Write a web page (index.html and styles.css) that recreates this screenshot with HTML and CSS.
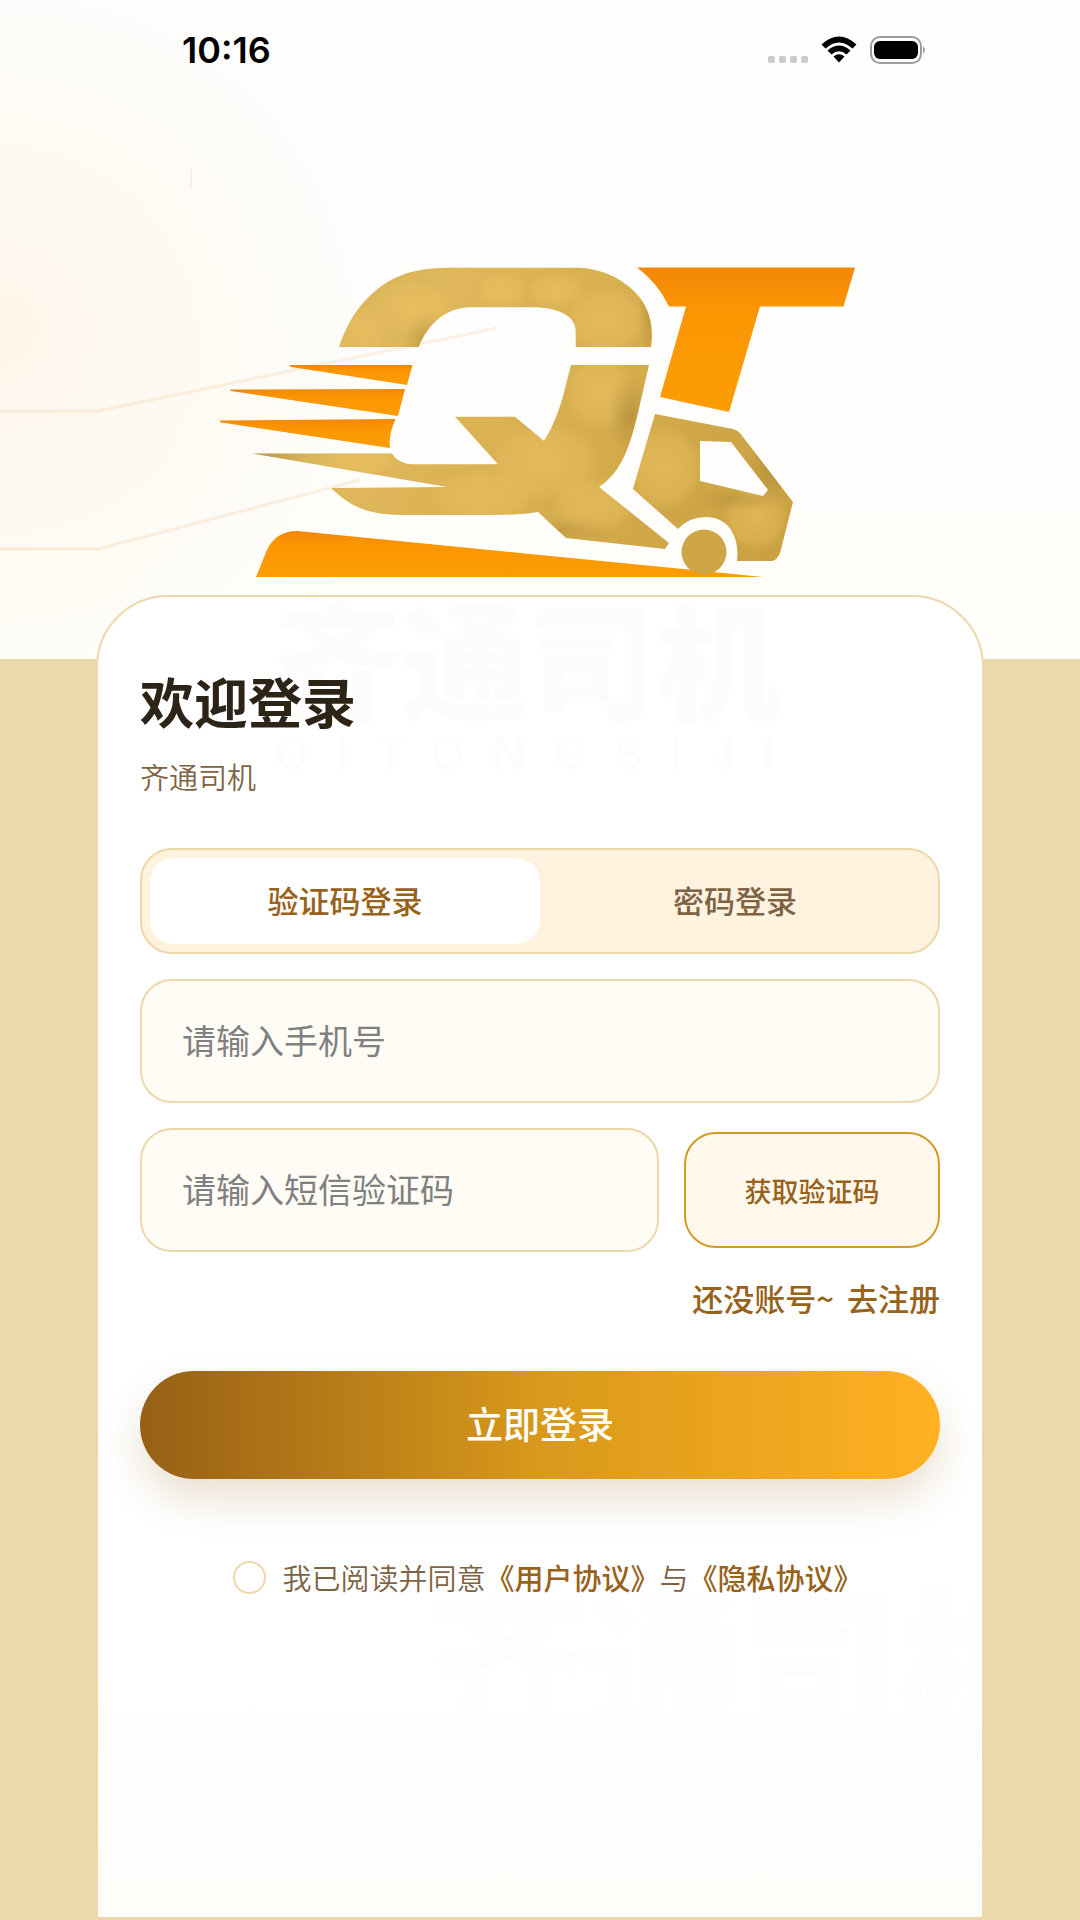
FILE: index.html
```html
<!DOCTYPE html>
<html lang="zh-CN">
<head>
  <meta charset="UTF-8">
  <meta name="viewport" content="width=device-width, initial-scale=1.0">
  <title>齐通司机 - 登录</title>
  <link rel="stylesheet" href="styles.css">
</head>
<body>
  <header class="hero">
    <svg class="hero-lines" viewBox="0 0 1080 660" preserveAspectRatio="xMidYMin slice" aria-hidden="true">
      <defs>
        <linearGradient id="lineFade" gradientUnits="userSpaceOnUse" x1="0" y1="0" x2="500" y2="0">
          <stop offset="0" stop-color="#f9ead5"/>
          <stop offset="1" stop-color="#fcf1e4"/>
        </linearGradient>
      </defs>
      <path d="M0 411H98L497 328M0 549H98L360 480" fill="none" stroke="url(#lineFade)" stroke-width="3"/>
      <path d="M191 168V187" stroke="#f3f1ee" stroke-width="2"/>
    </svg>

    <div class="status-bar">
      <span class="time">10:16</span>
      <div class="status-icons">
        <svg width="40" height="28" viewBox="0 0 40 28" aria-hidden="true">
          <g fill="#cbcbcb">
            <rect x="0" y="20" width="7" height="7" rx="2"/>
            <rect x="11" y="20" width="7" height="7" rx="2"/>
            <rect x="22" y="20" width="7" height="7" rx="2"/>
            <rect x="33" y="20" width="7" height="7" rx="2"/>
          </g>
        </svg>
        <svg width="36" height="28" viewBox="0 0 36 28" aria-hidden="true">
          <path d="M0.500 8.500Q18 -7.500 35.500 8.500L31.500 12.500Q18 0.500 4.500 12.500Z"/>
          <path d="M6.500 14.500Q18 4.500 29.500 14.500L25.500 18.500Q18 12 10.500 18.500Z"/>
          <path d="M12.500 20.500Q18 16 23.500 20.500L18 26.500Z"/>
        </svg>
        <svg width="57" height="28" viewBox="0 0 57 28" aria-hidden="true">
          <rect x="1" y="1" width="50" height="26" rx="9" fill="none" stroke="#9c9c9c" stroke-width="2"/>
          <rect x="4" y="5" width="44" height="18" rx="6"/>
          <path d="M53 10Q57 14 53 18Z" fill="#9c9c9c"/>
        </svg>
      </div>
    </div>

    <svg class="logo" viewBox="220 266 640 312" role="img" aria-label="齐通司机">
      <defs>
        <linearGradient id="gold" gradientUnits="userSpaceOnUse" x1="250" y1="300" x2="790" y2="560">
          <stop offset="0" stop-color="#d5b25d"/>
          <stop offset=".3" stop-color="#dfb75a"/>
          <stop offset=".6" stop-color="#d6ad4e"/>
          <stop offset="1" stop-color="#c9a040"/>
        </linearGradient>
        <linearGradient id="orange" x1="0" y1="0" x2="0" y2="1">
          <stop offset="0" stop-color="#f38608"/>
          <stop offset=".3" stop-color="#fb9603"/>
          <stop offset="1" stop-color="#fc9d04"/>
        </linearGradient>
        <radialGradient id="light">
          <stop offset="0" stop-color="#edc463" stop-opacity=".6"/>
          <stop offset=".7" stop-color="#eac060" stop-opacity=".4"/>
          <stop offset="1" stop-color="#e5bc5c" stop-opacity="0"/>
        </radialGradient>
        <radialGradient id="dark">
          <stop offset="0" stop-color="#a98636" stop-opacity=".6"/>
          <stop offset="1" stop-color="#b08c3a" stop-opacity="0"/>
        </radialGradient>
        <clipPath id="goldShape">
          <path d="M339 347C349 318 361 304 373 293C393 275 415 268 447 267.700H578C605 269 619 279 627 285C645 299 655 318 651 347H575.700V330C575 318 562 307 530 307.300H470C445 308 428 324 418.700 347Z"/>
          <path d="M252 453.500H392Q398 464 413 464.300H498L455 416.700H515L544 441C554 425 558 412 562 400L571 365H649L637 417C629 448 622 471 599 487L669 543L665 549L566 538L538 512Q520 515 487 515H400C365 514 350 506 331 488L447 487Z"/>
          <path d="M655 414L733 429Q737 430 740 433L793 502L780 553Q777 560 772 561H737C740 536 728 517 706 517Q689 517 678 529L633 489Z"/>
        </clipPath>
      </defs>
      <path fill="url(#orange)" d="M256 577L267 550Q276 531 297 531L530 554L683 569L763 577Z"/>
      <g clip-path="url(#goldShape)">
        <rect x="216" y="260" width="640" height="320" fill="url(#gold)"/>
        <ellipse cx="412" cy="307" rx="42" ry="30" fill="url(#light)"/>
        <ellipse cx="362" cy="330" rx="32" ry="28" fill="url(#light)"/>
        <ellipse cx="502" cy="290" rx="26" ry="18" fill="url(#light)"/>
        <ellipse cx="556" cy="291" rx="30" ry="18" fill="url(#light)"/>
        <ellipse cx="606" cy="320" rx="42" ry="36" fill="url(#light)"/>
        <ellipse cx="601" cy="392" rx="38" ry="40" fill="url(#light)"/>
        <ellipse cx="545" cy="462" rx="58" ry="42" fill="url(#light)"/>
        <ellipse cx="484" cy="497" rx="54" ry="30" fill="url(#light)"/>
        <ellipse cx="358" cy="461" rx="40" ry="16" fill="url(#light)"/>
        <ellipse cx="594" cy="505" rx="44" ry="30" fill="url(#light)"/>
        <ellipse cx="664" cy="468" rx="40" ry="44" fill="url(#light)"/>
        <ellipse cx="756" cy="518" rx="34" ry="34" fill="url(#light)"/>
        <ellipse cx="630" cy="415" rx="22" ry="44" fill="url(#dark)"/>
        <ellipse cx="428" cy="345" rx="26" ry="34" fill="url(#dark)"/>
        <ellipse cx="652" cy="310" rx="14" ry="60" fill="url(#dark)"/>
        <ellipse cx="560" cy="530" rx="60" ry="14" fill="url(#dark)" opacity=".6"/>
        <ellipse cx="770" cy="465" rx="22" ry="44" fill="url(#dark)"/>
        <ellipse cx="738" cy="500" rx="50" ry="12" fill="url(#dark)" opacity=".6"/>
        <ellipse cx="262" cy="456" rx="50" ry="10" fill="url(#dark)"/>
      </g>
      <path fill="#fffefc" d="M700 441L731 442L768 490L763 496L700 481Z"/>
      <circle cx="704" cy="552" r="22.500" fill="#cfa545"/>
      <g fill="url(#orange)">
        <path d="M289 365H412.500L407 385L291 367Z"/>
        <path d="M230 389.500L405 389L398 416L231 391Z"/>
        <path d="M217 420.500L395.500 419Q388 436 390 448L218 422Z"/>
        <path d="M637 267.500H855L843.500 306.500H760L729 412L660 397L686 306.500H669Q657 282 637 267.500Z"/>
      </g>
    </svg>
  </header>

  <main class="card">
    <div class="watermark" aria-hidden="true">
      <p class="mark-cn">齐通司机</p>
      <p class="mark-en">QITONGSIJI</p>
    </div>
    <div class="watermark watermark-bottom" aria-hidden="true">
      <p class="mark-cn">齐通司机</p>
      <p class="mark-en">QITONGSIJI</p>
    </div>

    <h1>欢迎登录</h1>
    <p class="subtitle">齐通司机</p>

    <form id="loginForm">
      <div class="tabs">
        <button type="button" class="tab active">验证码登录</button>
        <button type="button" class="tab">密码登录</button>
      </div>

      <input type="tel" class="field" id="phone" name="phone" placeholder="请输入手机号" aria-label="手机号">

      <div class="code-row">
        <input type="text" class="field" id="code" name="code" placeholder="请输入短信验证码" aria-label="短信验证码">
        <button type="button" class="code-btn">获取验证码</button>
      </div>

      <a class="register" href="#"><span>还没账号~</span> <span>去注册</span></a>

      <button type="submit" class="login-btn">立即登录</button>

      <div class="agreement">
        <input type="checkbox" id="agree" name="agree">
        <label for="agree">我已阅读并同意<a href="#">《用户协议》</a>与<a href="#">《隐私协议》</a></label>
      </div>
    </form>
  </main>
</body>
</html>
```

FILE: styles.css
```css
* {
  box-sizing: border-box;
}
body {
  display: flex;
  flex-direction: column;
  min-height: 100vh;
  margin: 0;
  background-color: #edd8ac;
  color: #2c2416;
  font-family: "Noto Sans CJK SC", sans-serif;
}
h1, p {
  margin: 0;
}
a {
  color: #97621a;
  text-decoration: none;
}
button, input {
  font-family: inherit;
  margin: 0;
}

/* top area */
.hero {
  position: relative;
  height: 659px;
  background:
    radial-gradient(ellipse 420px 400px at 0 330px, #fdf6ea, rgba(253, 246, 234, 0)),
    linear-gradient(to bottom, #fefefe 40%, #fffefa);
}
.hero-lines {
  position: absolute;
  top: 0;
  left: 0;
  width: 100%;
  height: 100%;
}
.status-bar {
  position: relative;
  display: flex;
  justify-content: space-between;
  align-items: center;
  height: 100px;
  padding: 0 153px 0 182px;
}
.time {
  color: #000;
  font-family: Inter, sans-serif;
  font-size: 36px;
  font-weight: 600;
}
.status-icons {
  display: flex;
  gap: 13px;
}
.logo {
  position: relative;
  display: block;
  width: 640px;
  max-width: 80%;
  margin: 166px auto 0;
}

/* login card */
.card {
  position: relative;
  flex: 1;
  overflow: hidden;
  margin: -64px 96px 1px;
  padding: 72px 42px 40px;
  background-color: #fff;
  background-image: linear-gradient(to bottom, #fff 80%, #fffdfa);
  border: 2px solid #edd8ac;
  border-radius: 72px 72px 0 0;
}
.watermark {
  position: absolute;
  top: -16px;
  left: 176px;
  color: #fdfcfa;
  white-space: nowrap;
}
.mark-cn {
  font-size: 127px;
  font-weight: 900;
  line-height: 150px;
}
.mark-en {
  font-family: Inter, sans-serif;
  font-size: 44px;
  line-height: 44px;
  letter-spacing: 28px;
}
.watermark-bottom {
  top: 978px;
  left: 332px;
  color: #fefdfc;
}
.watermark-bottom .mark-cn {
  font-size: 156px;
  line-height: 160px;
}
h1 {
  position: relative;
  font-size: 54px;
  font-weight: 700;
  line-height: 64px;
}
.subtitle {
  position: relative;
  margin-top: 23px;
  color: #7d6343;
  font-size: 29px;
  font-weight: 350;
  line-height: 40px;
}
form {
  position: relative;
  display: flex;
  flex-direction: column;
  margin-top: 52px;
}
.tabs {
  display: flex;
  height: 106px;
  padding: 8px;
  background-color: #fff3df;
  border: 2px solid #edd8ac;
  border-radius: 32px;
}
.tab {
  flex: 1;
  padding: 0 0 4px;
  background: none;
  border: none;
  border-radius: 24px;
  color: #7d6343;
  font-size: 31px;
  font-weight: 500;
  cursor: pointer;
}
.tab.active {
  background-color: #fff;
  color: #97621a;
}
.field {
  width: 100%;
  min-width: 0;
  height: 124px;
  margin-top: 25px;
  padding: 0 40px 4px;
  background-color: #fffcf6;
  border: 2px solid #edd8ac;
  border-radius: 32px;
  color: #2c2416;
  font-size: 34px;
}
.field::placeholder {
  color: #808080;
  opacity: 1;
}
.code-row {
  display: flex;
  align-items: center;
  gap: 25px;
  margin-top: 25px;
}
.code-row .field {
  flex: 1;
  margin-top: 0;
}
.code-btn {
  width: 32%;
  height: 116px;
  background-color: #fef9ec;
  border: 2px solid #d39b26;
  border-radius: 32px;
  color: #97621a;
  font-size: 27px;
  font-weight: 500;
  cursor: pointer;
}
.register {
  display: flex;
  gap: 13px;
  align-self: flex-end;
  margin-top: 24px;
  font-size: 31px;
  font-weight: 500;
  line-height: 44px;
}
.login-btn {
  height: 108px;
  margin-top: 51px;
  padding: 0 0 4px;
  background: linear-gradient(to right, #966015, #d9991b 50%, #ffb122);
  border: none;
  border-radius: 54px;
  box-shadow: 0 20px 40px rgba(151, 98, 26, 0.2);
  color: #fff;
  font-size: 37px;
  font-weight: 500;
  cursor: pointer;
}
.agreement {
  display: flex;
  justify-content: center;
  align-items: center;
  gap: 16px;
  margin-top: 78px;
  padding-left: 16px;
  color: #7d6343;
  font-size: 29px;
  font-weight: 350;
  line-height: 40px;
}
.agreement input {
  appearance: none;
  width: 33px;
  height: 33px;
  background-color: #fff;
  border: 2px solid #edd8ac;
  border-radius: 50%;
}
.agreement input:checked {
  background-color: #d9991b;
}
.agreement a {
  font-weight: 500;
}
```
